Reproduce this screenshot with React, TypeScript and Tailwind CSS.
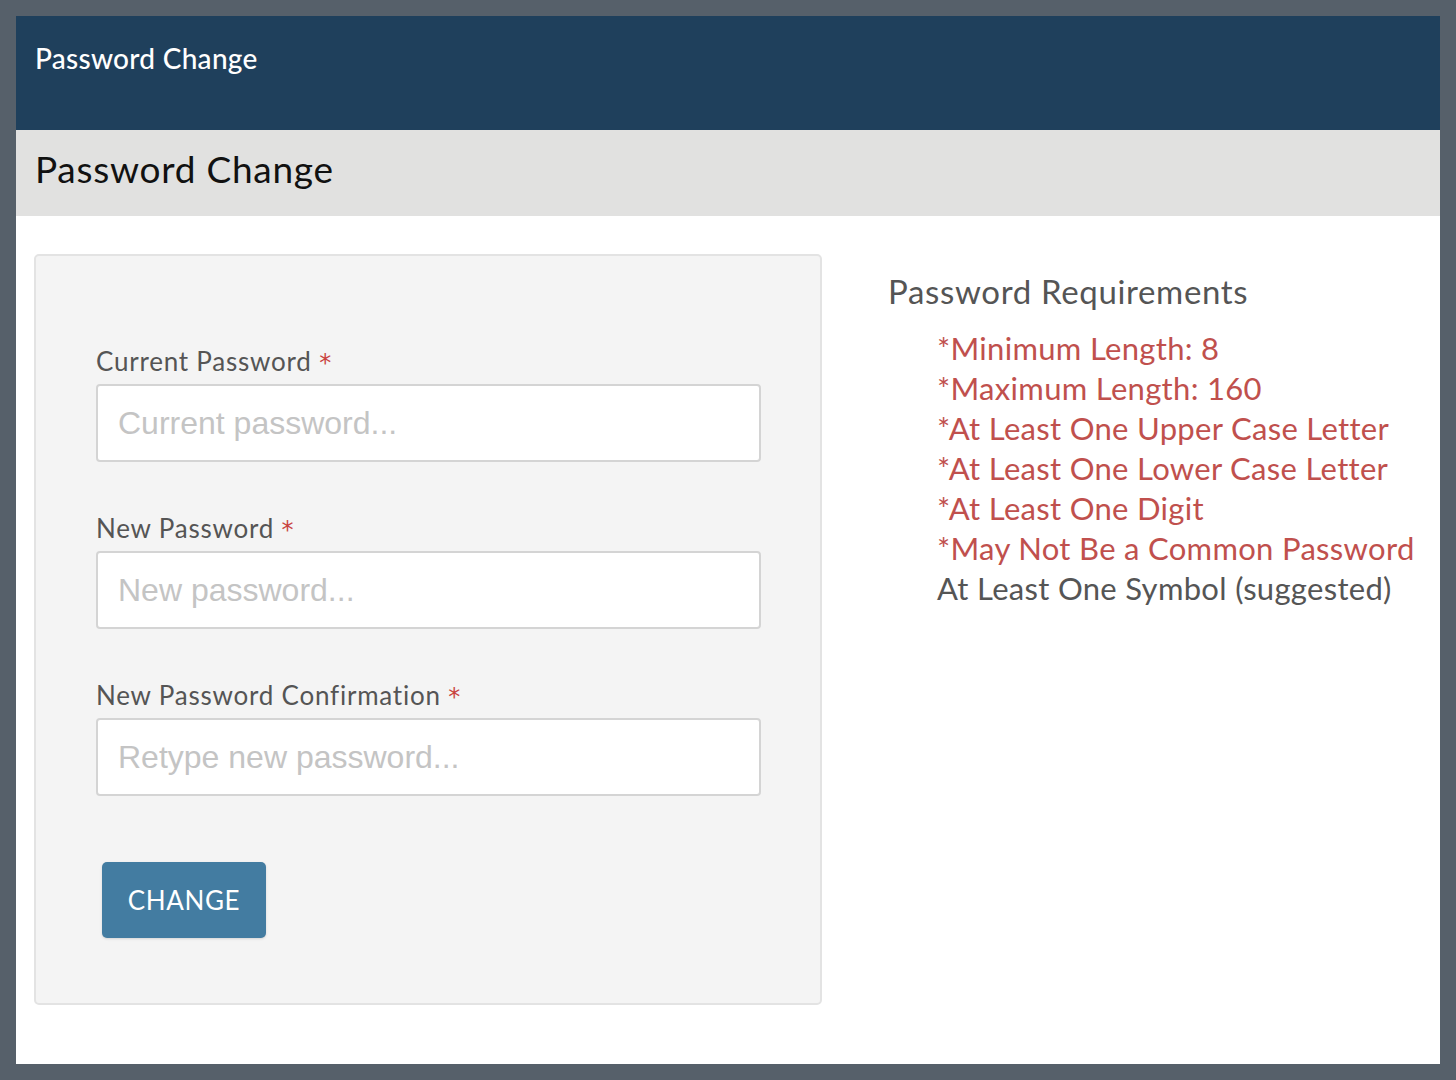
const FUTURA = "font-['Lato','Open_Sans',sans-serif]";

const requirements = [
  { text: "*Minimum Length: 8", required: true },
  { text: "*Maximum Length: 160", required: true },
  { text: "*At Least One Upper Case Letter", required: true },
  { text: "*At Least One Lower Case Letter", required: true },
  { text: "*At Least One Digit", required: true },
  { text: "*May Not Be a Common Password", required: true },
  { text: "At Least One Symbol (suggested)", required: false },
];

function Field({ label, placeholder }: { label: string; placeholder: string }) {
  return (
    <div className="flex flex-col">
      <label
        className={`${FUTURA} mb-[5px] block h-[36px] text-[26px] leading-[36px] tracking-[0.03em] text-[#555555]`}
      >
        {label}{" "}
        <span className="font-['DejaVu_Sans',sans-serif] text-[24px] leading-[20px] text-[#c9423f]">*</span>
      </label>
      <input
        type="password"
        placeholder={placeholder}
        className="h-[78px] w-[665px] rounded-[4px] border-2 border-[#d4d4d4] bg-white px-[20px] font-['Liberation_Sans',Arial,sans-serif] text-[32px] text-[#333] placeholder:text-[#c4c4c4] outline-none"
      />
    </div>
  );
}

export default function App() {
  return (
    <div className="min-h-screen bg-[#56606a] p-4">
      <div className="flex h-[1048px] flex-col bg-white">
        <div className="h-[114px] shrink-0 bg-[#1f405c] px-[19px] pt-[22px]">
          <h1 className={`${FUTURA} text-[28px] leading-[40px] font-medium tracking-[0.01em] text-white`}>
            Password Change
          </h1>
        </div>
        <div className="flex h-[86px] shrink-0 items-center bg-[#e1e1e0] px-[19px] pb-[8px]">
          <h2 className={`${FUTURA} text-[37px] leading-[44px] tracking-[0.02em] text-[#111]`}>Password Change</h2>
        </div>
        <div className="flex px-[18px] pt-[38px]">
          <form className="flex h-[751px] w-[788px] shrink-0 flex-col rounded-[5px] border-2 border-[#e3e3e3] bg-[#f4f4f4] pl-[60px] pt-[87px]">
            <div className="flex flex-col gap-[48px]">
              <Field label="Current Password" placeholder="Current password..." />
              <Field label="New Password" placeholder="New password..." />
              <Field label="New Password Confirmation" placeholder="Retype new password..." />
            </div>
            <button
              type="button"
              className={`${FUTURA} ml-[6px] mt-[66px] h-[76px] w-[164px] rounded-[5px] bg-[#437ca1] text-[26px] tracking-wide text-white shadow-sm`}
            >
              CHANGE
            </button>
          </form>
          <div className="pl-[66px] pt-[16px]">
            <h3 className={`${FUTURA} text-[33px] leading-[42px] tracking-[0.02em] text-[#555555]`}>
              Password Requirements
            </h3>
            <ul className="mt-[16px] pl-[49px]">
              {requirements.map((r) => (
                <li
                  key={r.text}
                  className={`${FUTURA} text-[31px] leading-[40px] tracking-[0.01em] ${r.required ? "text-[#c0504d]" : "text-[#555555]"}`}
                >
                  {r.text}
                </li>
              ))}
            </ul>
          </div>
        </div>
      </div>
    </div>
  );
}
